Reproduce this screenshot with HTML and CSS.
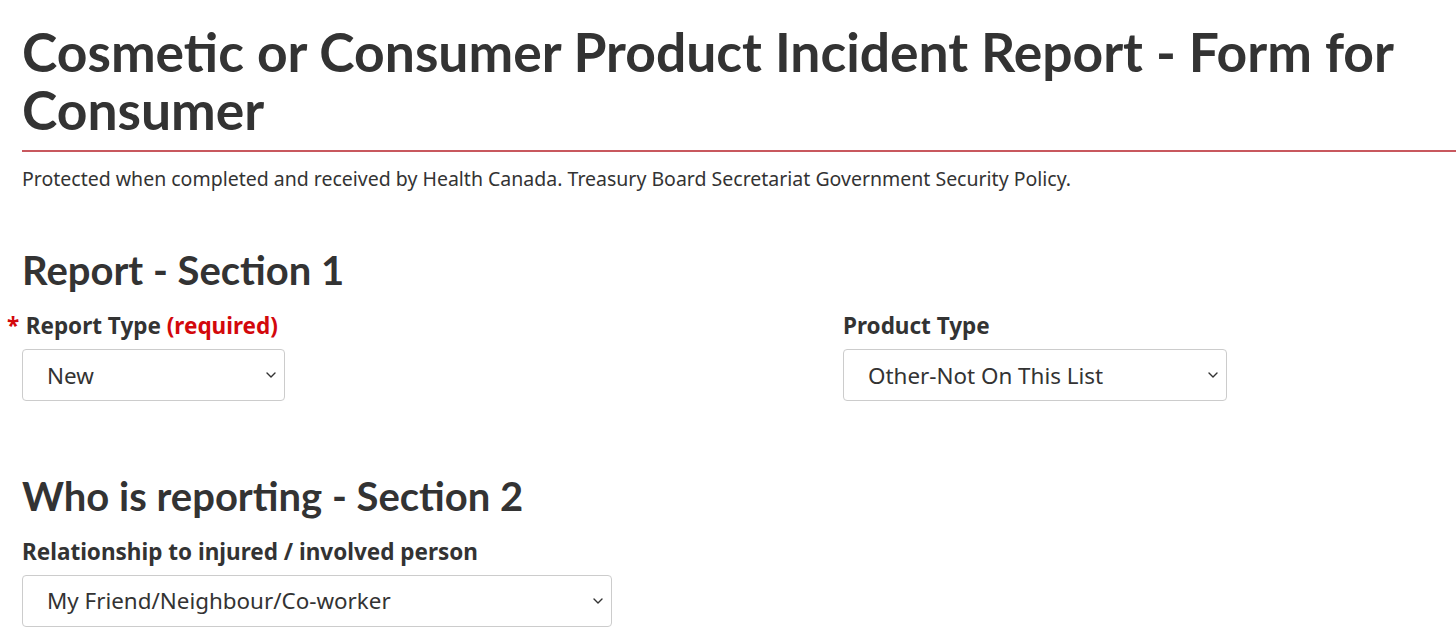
FILE: index.html
```html
<!DOCTYPE html>
<html lang="en">
<head>
<meta charset="utf-8">
<title>Cosmetic or Consumer Product Incident Report</title>
<link rel="stylesheet" href="styles.css">
</head>
<body>
<main class="page">
  <h1 class="title">Cosmetic or Consumer Product Incident Report - Form for Consumer</h1>
  <p class="notice">Protected when completed and received by Health Canada. Treasury Board Secretariat Government Security Policy.</p>

  <section class="section section-first">
    <h2 class="section-title">Report - Section 1</h2>
    <div class="row">
      <div class="field">
        <label class="label" for="rtype"><span class="star">*</span>Report Type <strong class="req">(required)</strong></label>
        <div class="select-wrap w-new">
          <select id="rtype" class="select"><option>New</option></select>
          <svg class="chev" width="10" height="6" viewBox="0 0 10 6"><path d="M1 1l4 4 4-4" fill="none" stroke="#333" stroke-width="1.4" stroke-linecap="round" stroke-linejoin="round"/></svg>
        </div>
      </div>
      <div class="field">
        <label class="label" for="ptype">Product Type</label>
        <div class="select-wrap w-prod">
          <select id="ptype" class="select"><option>Other-Not On This List</option></select>
          <svg class="chev" width="10" height="6" viewBox="0 0 10 6"><path d="M1 1l4 4 4-4" fill="none" stroke="#333" stroke-width="1.4" stroke-linecap="round" stroke-linejoin="round"/></svg>
        </div>
      </div>
    </div>
  </section>

  <section class="section section-second">
    <h2 class="section-title">Who is reporting - Section 2</h2>
    <div class="field">
      <label class="label" for="rel">Relationship to injured / involved person</label>
      <div class="select-wrap w-rel">
        <select id="rel" class="select"><option>My Friend/Neighbour/Co-worker</option></select>
        <svg class="chev" width="10" height="6" viewBox="0 0 10 6"><path d="M1 1l4 4 4-4" fill="none" stroke="#333" stroke-width="1.4" stroke-linecap="round" stroke-linejoin="round"/></svg>
      </div>
    </div>
  </section>
</main>
</body>
</html>
```

FILE: styles.css
```css
* { box-sizing: border-box; }

html, body {
  margin: 0;
  background: #fff;
  color: #333;
  font-family: "Noto Sans", "Open Sans", sans-serif;
}

.page {
  padding: 22px 0 0 22px;
}

.title {
  margin: 0;
  font-family: Lato, "Noto Sans", sans-serif;
  font-weight: 700;
  font-size: 53.4px;
  line-height: 58px;
  color: #333;
  padding-bottom: 12px;
  border-bottom: 2px solid #c8585e;
}

.notice {
  margin: 13px 0 0;
  font-size: 19.5px;
  line-height: 1.4;
  color: #333;
}

.section-title {
  margin: 0;
  font-family: Lato, "Noto Sans", sans-serif;
  font-weight: 700;
  font-size: 40px;
  line-height: 48px;
  color: #333;
}

.section-first { margin-top: 54px; }
.section-second { margin-top: 71px; }

.row {
  display: grid;
  grid-template-columns: 821px 1fr;
}

.field {
  display: flex;
  flex-direction: column;
  align-items: flex-start;
  margin-top: 16.6px;
}

.label {
  font-size: 22.5px;
  line-height: 29.25px;
  font-weight: 700;
  color: #333;
  margin-bottom: 9px;
}

.star {
  color: #d3080c;
  margin-left: -15px;
  margin-right: 6.5px;
}

.req {
  color: #d3080c;
  font-weight: 700;
}

.select-wrap {
  position: relative;
  height: 52px;
}

.w-new { width: 263px; }
.w-prod { width: 384px; }
.w-rel { width: 590px; }

.select {
  appearance: none;
  -webkit-appearance: none;
  width: 100%;
  height: 100%;
  margin: 0;
  padding: 0 30px 0 24px;
  border: 1px solid #ccc;
  border-radius: 4px;
  background: #fff;
  font-family: "Noto Sans", "Open Sans", sans-serif;
  font-size: 22.4px;
  color: #333;
}

.chev {
  position: absolute;
  right: 9px;
  top: 23px;
  pointer-events: none;
}
```
